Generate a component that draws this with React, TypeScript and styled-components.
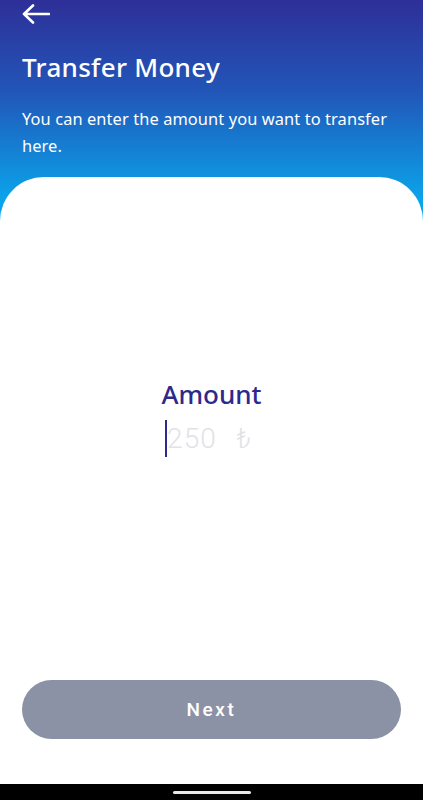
import * as React from 'react';
import styled, { createGlobalStyle } from 'styled-components';

const GlobalStyle = createGlobalStyle`
	html, body {
		margin: 0;
		padding: 0;
		height: 100%;
	}
	body {
		font-family: 'Noto Sans', 'Open Sans', sans-serif;
		overflow: hidden;
	}
	#root {
		height: 100%;
	}
`;

const Screen = styled.div`
	display: flex;
	flex-direction: column;
	width: 423px;
	height: 800px;
	background: linear-gradient(180deg, #2e2f98 0%, #2255b8 45%, #0aa4ea 100%);
	background-size: 100% 200px;
	background-repeat: no-repeat;
	background-color: #0aa4ea;
`;

const Header = styled.header`
	display: flex;
	flex-direction: column;
	padding: 2px 22px 0;
	height: 177px;
	box-sizing: border-box;
	color: #ffffff;
`;

const BackButton = styled.button`
	display: flex;
	align-items: center;
	width: 28px;
	height: 24px;
	padding: 0;
	border: none;
	background: none;
	cursor: pointer;
`;

const Title = styled.h1`
	margin: 25px 0 0;
	font-size: 26px;
	font-weight: 500;
	line-height: 32px;
	letter-spacing: 0.3px;
`;

const Subtitle = styled.p`
	margin: 22px 0 0;
	font-size: 16.4px;
	line-height: 27px;
	font-weight: 400;
	letter-spacing: 0.1px;
`;

const Card = styled.main`
	flex: 1;
	display: flex;
	flex-direction: column;
	background: #ffffff;
	border-radius: 44px 44px 0 0;
	padding: 0 22px 45px;
`;

const AmountBlock = styled.div`
	flex: 1;
	display: flex;
	flex-direction: column;
	align-items: center;
	justify-content: center;
	padding-bottom: 20px;
`;

const AmountLabel = styled.label`
	font-size: 26px;
	font-weight: 500;
	color: #2d2a8c;
	line-height: 30px;
`;

const InputRow = styled.div`
	display: flex;
	align-items: center;
	margin-top: 10px;
	margin-right: 6px;
	height: 40px;
`;

const Caret = styled.span`
	width: 2px;
	height: 37px;
	background: #2d2a8c;
`;

const Placeholder = styled.span`
	font-family: Roboto, 'Noto Sans', sans-serif;
	font-size: 28px;
	font-weight: 300;
	color: #e2e2e6;
	letter-spacing: 1px;
	word-spacing: 12px;
`;

const NextButton = styled.button`
	height: 59px;
	width: 100%;
	border: none;
	border-radius: 30px;
	background: #8c92a6;
	color: #ffffff;
	font-family: Roboto, 'Noto Sans', sans-serif;
	font-size: 19px;
	font-weight: 500;
	letter-spacing: 2.6px;
`;

const NavBar = styled.div`
	display: flex;
	align-items: center;
	justify-content: center;
	height: 16px;
	background: #000000;
`;

const NavHandle = styled.span`
	width: 78px;
	height: 3px;
	border-radius: 2px;
	background: #e8e8e8;
`;

const App = () => (
	<>
		<GlobalStyle />
		<Screen>
			<Header>
				<BackButton aria-label="Back">
					<svg width="28" height="24" viewBox="0 0 28 24" fill="none">
						<path
							d="M27 12H2M11 3.5L2 12l9 8.5"
							stroke="#ffffff"
							strokeWidth="2.6"
							strokeLinecap="round"
							strokeLinejoin="round"
						/>
					</svg>
				</BackButton>
				<Title>Transfer Money</Title>
				<Subtitle>You can enter the amount you want to transfer here.</Subtitle>
			</Header>
			<Card>
				<AmountBlock>
					<AmountLabel>Amount</AmountLabel>
					<InputRow>
						<Caret />
						<Placeholder>250 ₺</Placeholder>
					</InputRow>
				</AmountBlock>
				<NextButton>Next</NextButton>
			</Card>
			<NavBar>
				<NavHandle />
			</NavBar>
		</Screen>
	</>
);

export default App;
